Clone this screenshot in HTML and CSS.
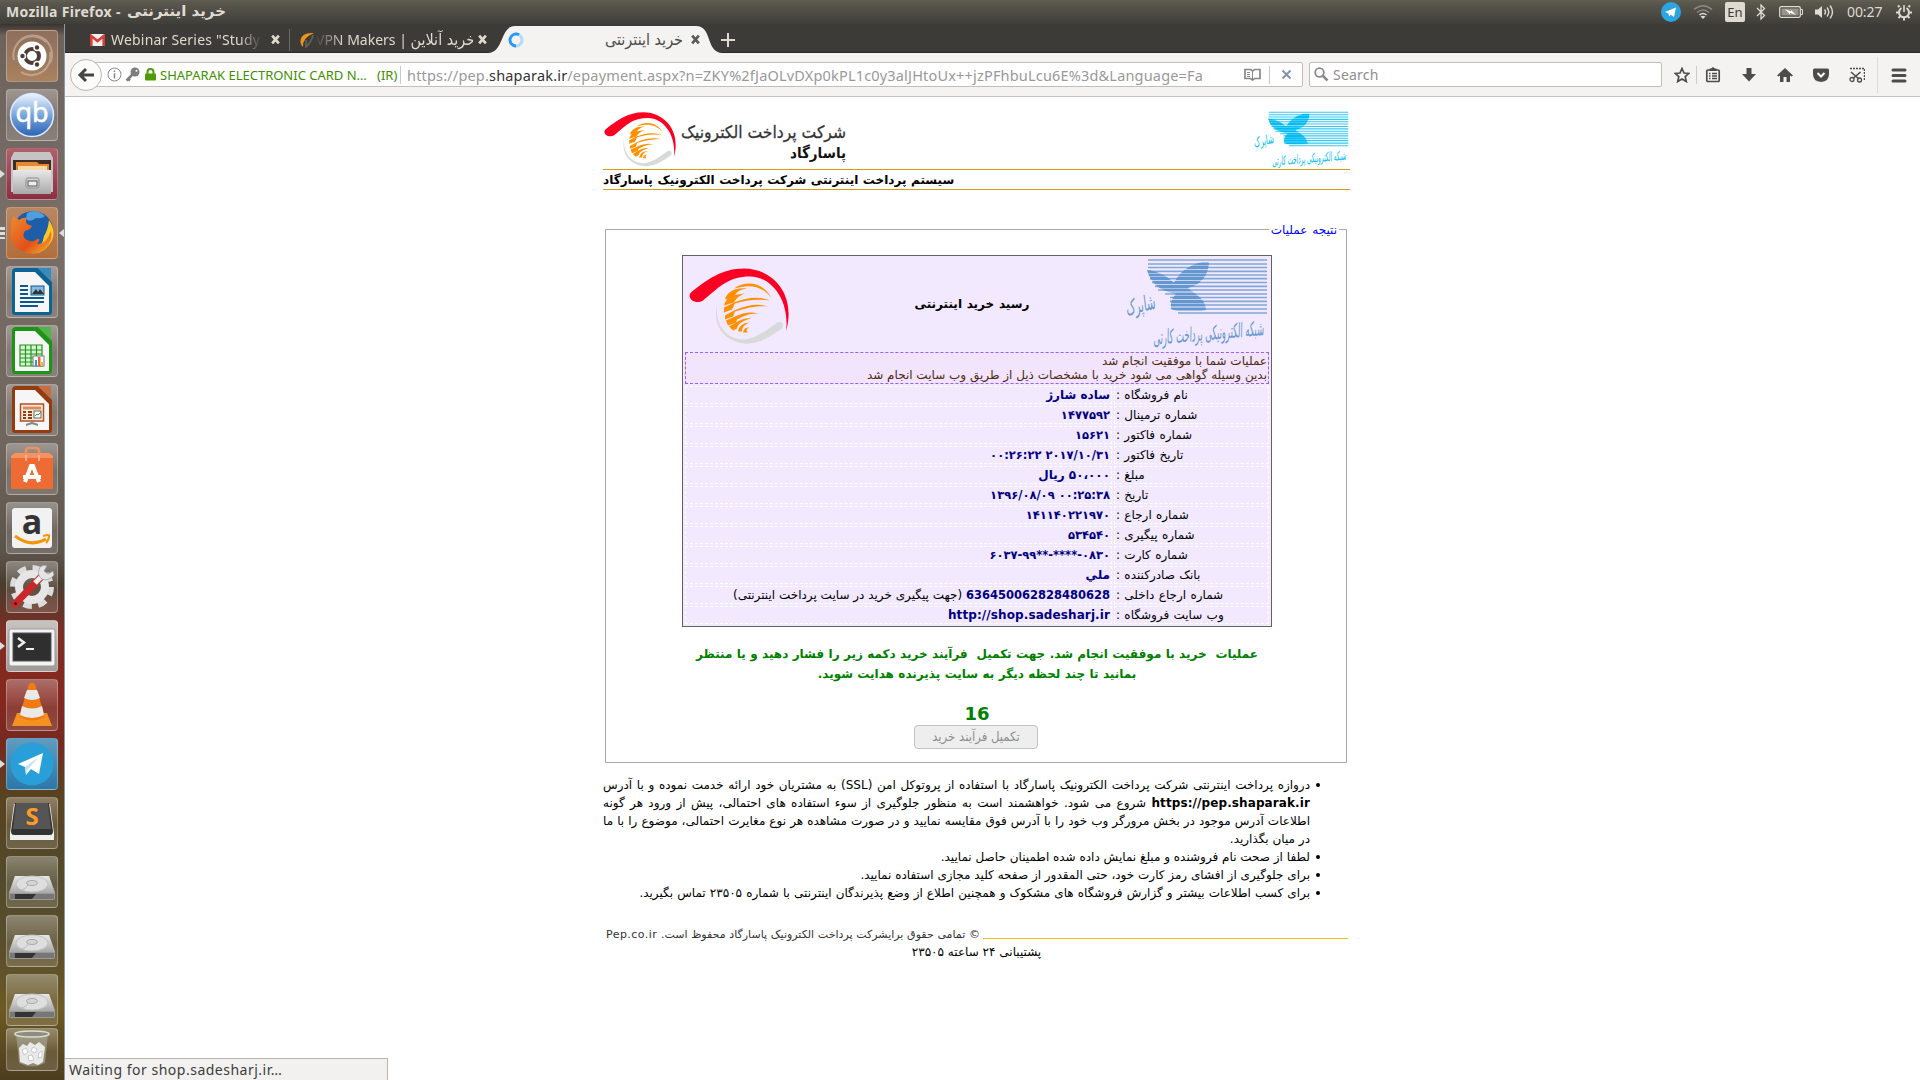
FILE: index.html
```html
<!DOCTYPE html>
<html lang="fa">
<head>
<meta charset="utf-8">
<title>خرید اینترنتی</title>
<link rel="stylesheet" href="styles.css">
</head>
<body>
<svg class="defs" width="0" height="0">
  <defs>
    <linearGradient id="steel" x1="0" y1="0" x2="0" y2="1"><stop offset="0" stop-color="#e8e8e8"/><stop offset="1" stop-color="#a9a9a9"/></linearGradient>
    <linearGradient id="sky" x1="0" y1="0" x2="0" y2="1"><stop offset="0" stop-color="#eef6ff"/><stop offset=".55" stop-color="#6f9fd8"/><stop offset="1" stop-color="#2b62b5"/></linearGradient>
    <linearGradient id="fire" x1="0" y1="0" x2="1" y2="1"><stop offset="0" stop-color="#f08a2c"/><stop offset=".6" stop-color="#e2501b"/><stop offset="1" stop-color="#f7b52a"/></linearGradient>
    <clipPath id="wings"><path d="M21 12C31 13 42 18 48 25C54 12 68 4 83 3C83 17 75 27 62 30C69 36 80 41 80 52C66 56 52 54 45 51C44 45 46 40 50 36C33 33 24 24 21 12Z"/></clipPath>
    <symbol id="pep" viewBox="0 0 100 76">
      <path d="M2 24C18 11 33 0 55 0C82 0 108 24 97 63C101 34 84 8 61 8C40 8 32 17 14 32C6 37-3 29 2 24Z" fill="#fb0023"/>
      <path d="M28 36C22 66 46 76 60 75C74 74 84 66 93 60C96 54 91 52 87 55C76 63 66 70 56 71C41 71 26 61 28 36Z" fill="#d8d9d9"/>
      <g fill="#ff9000">
        <path d="M45 20C56 12 74 13 82 29C72 16 59 16 45 20Z"/>
        <path d="M36 31C38 24 45 19 58 20C50 21 47 24 45 29Z"/>
        <path d="M35 37C37 28 45 26 56 25C50 27 47 30 45 34Z"/>
        <path d="M35 44L35 39L45 34C59 28 72 28 81 32C66 30 57 32 46 35L43 41Z"/>
        <path d="M36 51L36 47L45 42C59 36 70 35 79 38C66 37 57 40 46 43L44 48Z"/>
        <path d="M39 57L37 52L46 48C55 44 62 43 69 45C59 45 54 48 48 51L47 54Z"/>
        <path d="M44 62L40 58L47 54C52 51 57 49 62 50C54 52 49 55 48 60Z"/>
        <path d="M49 63C50 57 55 54 61 54C55 56 53 59 53 63Z"/>
        <path d="M54 64C55 60 57 59 60 59C57 61 57 62 59 64Z"/>
      </g>
    </symbol>
    <symbol id="shaparak" viewBox="0 0 142 92">
      <path d="M22 2H141M22 6H141M22 9.500H141M22 13.300H141M23 17H141M24 20.700H141M26 24.500H141M29 28.300H141M32 32H141M39 36H141M44 39.500H141M44 43.300H141M46 47H141M48 51H141M52 55H141" stroke="currentColor" stroke-width="1.700" opacity=".8"/>
      <path clip-path="url(#wings)" d="M20 6H90M20 9.500H90M20 13.300H90M20 17H90M20 20.700H90M20 24.500H90M20 28.300H90M20 32H90M20 36H90M20 39.500H90M20 43.300H90M20 47H90M20 51H90" stroke="currentColor" stroke-width="3.200"/>
      <text class="callig" x="0" y="54" font-size="21" textLength="30" lengthAdjust="spacingAndGlyphs" transform="rotate(-14 15 52)" fill="currentColor" direction="ltr">شاپرک</text>
      <text class="callig" x="27" y="82" font-size="20" textLength="111" lengthAdjust="spacingAndGlyphs" transform="rotate(-5 82 80)" fill="currentColor" direction="ltr">شبکه الکترونیکی پرداخت کارتی</text>
    </symbol>
    <symbol id="disk" viewBox="0 0 52 52">
      <path d="M9 20L43 20L49 37V42Q49 44 47 44H5Q3 44 3 42V37Z" fill="#999"/>
      <path d="M9 20L43 20L49 37H3Z" fill="url(#steel)"/>
      <path d="M4 38H48V43H4Z" fill="#777"/><path d="M9 38H30L26 43H9Z" fill="#333"/>
      <ellipse cx="26" cy="28" rx="16" ry="8" fill="#dedede" stroke="#c2c2c2"/><ellipse cx="26" cy="27" rx="5.500" ry="2.500" fill="#d5d5d5" stroke="#aaa"/>
      <path d="M13 34Q21 34 22 28" fill="none" stroke="#bbb"/>
    </symbol>
    <symbol id="close" viewBox="0 0 10 10"><path d="M2 1.500L8 8.500M8 1.500L2 8.500" stroke="currentColor" stroke-width="2.500"/></symbol>
  </defs>
</svg>

<header class="panel">
  <div class="panel-title" dir="ltr"><span class="pt-en">Mozilla Firefox -</span><span class="pt-fa">خرید اینترنتی</span></div>
  <div class="indicators">
    <svg class="i-tg" width="20" height="20" viewBox="0 0 20 20"><circle cx="10" cy="10" r="10" fill="#2ca5e0"/><path d="M4 10L15 5.500L13 15L9.800 12.800L8 14.500L7.500 11.500Z" fill="#fff"/></svg>
    <svg class="i-wifi" width="20" height="16" viewBox="0 0 20 16"><g fill="none" stroke-width="1.600"><path d="M1 5.500Q10-2 19 5.500" stroke="#8b8981"/><path d="M4 8.500Q10 3.500 16 8.500" stroke="#8b8981"/><path d="M6.500 11Q10 8 13.500 11" stroke="#dfdbd2"/></g><path d="M7.500 12.500Q10 10.800 12.500 12.500L10 15Z" fill="#dfdbd2"/></svg>
    <span class="lang">En</span>
    <svg class="i-bt" width="10" height="18" viewBox="0 0 10 18"><path d="M1 5L8.500 12.500L5 16V2L8.500 5.500L1 13" fill="none" stroke="#dfdbd2" stroke-width="1.300"/></svg>
    <svg class="i-bat" width="24" height="12" viewBox="0 0 24 12"><rect x=".7" y=".7" width="20.600" height="10.600" rx="1.500" fill="none" stroke="#dfdbd2" stroke-width="1.300"/><path d="M22 3.500H23.500V8.500H22" fill="none" stroke="#dfdbd2"/><rect x="2.500" y="2.500" width="17" height="7" fill="#98958d"/><path d="M6 3L12 5.500V4L17 9L11 6.700V8.500Z" fill="#fff"/></svg>
    <svg class="i-vol" width="20" height="18" viewBox="0 0 20 18"><path d="M0 6.500H3L7 3V15L3 11.500H0Z" fill="#dfdbd2"/><path d="M9.500 6.500Q11.500 9 9.500 11.500M12 4.500Q15.500 9 12 13.500M15 2.500Q20 9 15 15.500" fill="none" stroke="#dfdbd2" stroke-width="1.400"/></svg>
    <span class="clock">00:27</span>
    <svg class="i-gear" width="16" height="18" viewBox="0 0 16 18"><g stroke="#dfdbd2" fill="none"><path d="M5.500 5A5 5 0 1 0 10.500 5" stroke-width="2"/><path d="M8 2V9" stroke-width="1.600"/><path d="M3.500 4L2 2.500M12.500 4L14 2.500M2.500 9.500H0M13.500 9.500H16M4 13.500L2.500 15M12 13.500L13.500 15M8 15V17.500" stroke-width="2"/></g></svg>
  </div>
</header>

<div class="workspace">
<nav class="launcher">
  <div class="tile t-dash"><svg viewBox="0 0 52 52"><path d="M8 30A19 19 0 0 1 40 12M44 22A19 19 0 0 1 15 42M10 16A19 19 0 0 1 44 33" fill="none" stroke="#cdb29d" stroke-width="2" opacity=".7"/><circle cx="26" cy="26" r="14.500" fill="#fff"/><circle cx="26" cy="26" r="7" fill="none" stroke="#4e3e37" stroke-width="4"/><g fill="#4e3e37" stroke="#fff" stroke-width="1.500"><circle cx="16.500" cy="26" r="3"/><circle cx="31" cy="17.500" r="3"/><circle cx="31" cy="34.500" r="3"/></g></svg></div>
  <div class="tile"><svg viewBox="0 0 52 52"><circle cx="26" cy="26" r="21.500" fill="url(#sky)" stroke="#dcebff" stroke-width="1.500"/><text x="26" y="33" text-anchor="middle" font-size="27" class="qb" fill="#fff" stroke="#fff" stroke-width=".5">qb</text></svg></div>
  <div class="tile t-files"><svg viewBox="0 0 52 52"><path d="M8 4H44L47 10V44H5V10Z" fill="#c4c4c4"/><path d="M7 12H45V26H7Z" fill="#3e2b22"/><path d="M10 14H31L33 16H43V26H10Z" fill="#e58734"/><path d="M12 18H41V24H12Z" fill="#f9d9a5"/><path d="M7 22H45V46H7Z" fill="url(#steel)"/><rect x="20" y="30" width="13" height="10" rx="2" fill="#d5d5d5" stroke="#8d8d8d"/><rect x="22" y="33" width="9" height="5" fill="#eee" stroke="#555"/></svg><i class="mark"></i></div>
  <div class="tile t-fox"><svg viewBox="0 0 52 52"><circle cx="27" cy="24" r="20" fill="#1e5da8"/><path d="M21 6Q30 1 39 9Q36 12 30 11Q24 16 20 12Z" fill="#4f9fdc"/><path d="M43 13Q52 27 43 38Q35 48 25 46Q37 40 38 29Q42 23 43 13Z" fill="#fbc926"/><path d="M7 9Q11 11 13 13Q17 10 21 11Q19 14 21 17L26 19Q24 23 19 24Q15 30 21 33Q27 36 31 32Q36 31 31 37Q40 38 45 24Q47 34 39 42Q29 50 16 44Q2 37 5 22Q5 14 7 9Z" fill="url(#fire)"/></svg><i class="mark triple"></i><i class="mark right"></i></div>
  <div class="tile"><svg viewBox="0 0 52 52"><path d="M10 2H32L46 16V46Q46 49 43 49H9Q6 49 6 46V6Q6 2 10 2Z" fill="#0c6395"/><path d="M32 2H45V14Z" fill="#348bbd"/><path d="M9 6H29L43 20V46H9Z" fill="#f6f6f6"/><path d="M14 20H22M14 24H22M14 28H22M14 32H38M14 36H38M14 40H32" stroke="#0b5a8a" stroke-width="2"/><rect x="25" y="20" width="13" height="9" fill="#83bce0" stroke="#0b5a8a"/><path d="M26 28L30 23L32 26L34 23L38 28Z" fill="#333"/></svg></div>
  <div class="tile"><svg viewBox="0 0 52 52"><path d="M10 2H32L46 16V46Q46 49 43 49H9Q6 49 6 46V6Q6 2 10 2Z" fill="#1c9414"/><path d="M32 2H45V14Z" fill="#51b545"/><path d="M9 6H29L43 20V46H9Z" fill="#f6f6f6"/><path d="M14 20H36V41H14Z" fill="#d9f5d6"/><path d="M14 20H36V41H14ZM14 25H36M14 29H36M14 33H36M14 37H36M19.500 20V41M25 20V41M30.500 20V41" fill="none" stroke="#219618" stroke-width="1.200"/><rect x="27" y="31" width="11" height="10" fill="#fff" stroke="#777"/><path d="M29 41V35H31V41Z" fill="#259bdc"/><path d="M32 41V32H34.500V41Z" fill="#e8682a"/><path d="M35 41V37H37V41Z" fill="#f1bb35"/></svg></div>
  <div class="tile"><svg viewBox="0 0 52 52"><path d="M10 2H32L46 16V46Q46 49 43 49H9Q6 49 6 46V6Q6 2 10 2Z" fill="#943b10"/><path d="M32 2H45V14Z" fill="#c96c40"/><path d="M9 6H29L43 20V46H9Z" fill="#f6f6f6"/><rect x="14.500" y="20" width="23" height="17" fill="#fbe9de" stroke="#b3521d" stroke-width="1.500"/><path d="M17 24H35" stroke="#d98c5d" stroke-width="3"/><path d="M17 28H20M22 28H26M17 31H20M22 31H26M17 34H20M22 34H26" stroke="#943b10" stroke-width="2"/><rect x="28" y="27" width="7" height="7" fill="#fff" stroke="#666"/><path d="M29 32L31 30L32 31L35 28" stroke="#2aa02a" fill="none"/><path d="M26 37V39L20 41M26 39L32 41" stroke="#888" stroke-width="2" fill="none"/></svg></div>
  <div class="tile"><svg viewBox="0 0 52 52"><path d="M20 17V8Q20 5 23 5H30Q33 5 33 8V17" fill="none" stroke="#f09060" stroke-width="2.500"/><path d="M5 13L9 10H43L47 13V46H5Z" fill="#ee6c33"/><path d="M5 13L9 10H43L47 13V15H5Z" fill="#f6925f"/><path d="M20 12V18M33 12V18" stroke="#f7b08c" stroke-width="2"/><path d="M19 39L25 23H27L33 39M17 34H35" fill="none" stroke="#fff" stroke-width="4"/></svg></div>
  <div class="tile"><svg viewBox="0 0 52 52"><rect x="6" y="6" width="40" height="40" rx="3" fill="#f2f2f2"/><text x="26" y="32" text-anchor="middle" font-size="34" class="amz" fill="#333">a</text><path d="M9 34Q25 46 40 37" fill="none" stroke="#f79400" stroke-width="3"/><path d="M37 34Q44 32 43 34Q43 38 40 41" fill="none" stroke="#f79400" stroke-width="2"/></svg></div>
  <div class="tile"><svg viewBox="0 0 52 52"><circle cx="26" cy="26" r="18" fill="none" stroke="#dcdcdc" stroke-width="8" stroke-dasharray="8 6.137"/><circle cx="26" cy="26" r="13" fill="none" stroke="#e6e6e6" stroke-width="8"/><path d="M9 43L35 16" stroke="#c82828" stroke-width="7" stroke-linecap="round"/><path d="M29 22L37 14" stroke="#eee" stroke-width="5"/><path d="M34 6Q30 14 36 18Q42 21 48 14L47 10L42 13L38 10L41 5Q38 3 34 6Z" fill="#e4e4e4" stroke="#999" stroke-width=".7"/><circle cx="9.500" cy="42.500" r="1.500" fill="#600"/></svg></div>
  <div class="tile t-term"><svg viewBox="0 0 52 52"><rect x="3" y="9" width="46" height="37" rx="2" fill="#f3f3f3" stroke="#999"/><rect x="7" y="13" width="38" height="28" fill="#2f2f2f" stroke="#555"/><path d="M12 18L18 22.500L12 27" stroke="#eee" stroke-width="2.500" fill="none"/><path d="M20 29H28" stroke="#eee" stroke-width="2"/></svg><i class="mark"></i></div>
  <div class="tile"><svg viewBox="0 0 52 52"><path d="M11 34H41L46 47H6Z" fill="#f59120"/><path d="M23 5Q26 2 29 5L39 38Q26 45 13 38Z" fill="#f17b13"/><path d="M21 11H31L34 19Q26 23 18 19ZM16 27Q26 32 36 27L38 36Q26 42 14 36Z" fill="#e9e9e9"/></svg></div>
  <div class="tile t-tele"><svg viewBox="0 0 52 52"><circle cx="26" cy="26" r="21.500" fill="#299fda"/><path d="M12 26L37 15L33 36L25 31L20 37L19 29Z" fill="#fff"/><path d="M19 29L33 19L22 31L20 37Z" fill="#c9deec"/></svg><i class="mark"></i></div>
  <div class="tile"><svg viewBox="0 0 52 52"><path d="M8 7H44L48 36V43H4V36Z" fill="#efefef"/><path d="M9 6H43L47 34Q47 38 44 38H8Q5 38 5 34Z" fill="#333"/><path d="M10 6H42L45 32H7Z" fill="#555"/><text x="26" y="28" text-anchor="middle" font-size="24" class="amz" fill="#ff9a2b">S</text></svg></div>
  <div class="tile"><svg viewBox="0 0 52 52"><use href="#disk"/></svg></div>
  <div class="tile"><svg viewBox="0 0 52 52"><use href="#disk"/></svg></div>
  <div class="tile"><svg viewBox="0 0 52 52"><use href="#disk"/></svg></div>
  <div class="tile t-trash"><svg viewBox="0 0 52 43"><path d="M10 5H42L39 35Q26 42 13 35Z" fill="#b5b5aa" opacity=".5"/><path d="M13 20L17 16L21 18L24 14L29 17L33 14L39 19L37 34L32 37L27 35L22 37L14 34Z" fill="#e9e9e9"/><path d="M16 22L20 20L22 24L18 27ZM27 19L31 21L29 25L25 23ZM33 25L36 23L36 29L32 30ZM22 28L26 27L28 32L23 33Z" fill="#fff" stroke="#bcbcbc" stroke-width=".8"/><ellipse cx="26" cy="6" rx="17" ry="3" fill="#8f8d7e" stroke="#dcdcd6" stroke-width="1.500"/></svg></div>
</nav>

<main class="browser">
  <div class="tabs">
    <div class="tab tab1">
      <svg width="15" height="12" viewBox="0 0 15 12"><rect width="15" height="12" rx="1" fill="#f2f2f2"/><path d="M1.300 12V2L7.500 7L13.700 2V12" fill="none" stroke="#d93f35" stroke-width="2.600"/></svg>
      <span class="tab-text">Webinar Series "Study</span>
      <svg class="x" width="11" height="11"><use href="#close"/></svg>
    </div>
    <div class="tab tab2">
      <svg width="17" height="16" viewBox="0 0 17 16"><path d="M15 1Q3 0 1.500 8Q1 12 4 15Q3 6 15 1Z" fill="#e9941c"/><path d="M7 8V15Q13 9 14 3" fill="none" stroke="#65625b" stroke-width="1.600"/></svg>
      <span class="tab-text" dir="ltr">VPN Makers | <span class="vfa">خرید آنلاین</span></span>
      <svg class="x" width="11" height="11"><use href="#close"/></svg>
    </div>
    <div class="tab active">
      <svg class="tab-shape" width="236" height="29" viewBox="0 0 236 29"><path d="M0 29C16 29 12 2 27 2H208C225 2 217 29 235 29Z" fill="#f4f3f1"/></svg>
      <svg class="spin" width="16" height="16" viewBox="0 0 16 16"><circle cx="8" cy="8" r="6" fill="none" stroke="#b5daf7" stroke-width="3"/><path d="M11 2.800A6 6 0 1 0 8 14" fill="none" stroke="#2f97ee" stroke-width="2.800"/></svg>
      <span class="tab-text dark">خرید اینترنتی</span>
      <svg class="x dark" width="11" height="11"><use href="#close"/></svg>
    </div>
    <svg class="plus" width="16" height="16"><path d="M8 1V15M1 8H15" stroke="#dfdbd2" stroke-width="2"/></svg>
  </div>

  <div class="navbar">
    <span class="back"><svg width="18" height="16" viewBox="0 0 18 16"><path d="M9 2L3 8L9 14M3 8H17" fill="none" stroke="#444" stroke-width="3"/></svg></span>
    <div class="urlbox">
      <svg class="u-info" width="15" height="15" viewBox="0 0 15 15"><circle cx="7.500" cy="7.500" r="6.500" fill="none" stroke="#888"/><path d="M7.500 3.500V5M7.500 6.200V11.500" stroke="#888" stroke-width="1.500"/></svg>
      <svg class="u-key" width="15" height="15" viewBox="0 0 15 15"><circle cx="10" cy="5" r="4.500" fill="#7d7d7d"/><circle cx="11.500" cy="3.800" r="1" fill="#fff"/><path d="M8 7L1.500 13.500M3 11.500L5 13.500" stroke="#7d7d7d" stroke-width="2.500"/></svg>
      <svg class="u-lock" width="11" height="13" viewBox="0 0 11 13"><rect y="5.500" width="11" height="7" rx="1" fill="#4f9a06"/><path d="M2.500 6V4Q2.500 1 5.500 1Q8.500 1 8.500 4V6" fill="none" stroke="#4f9a06" stroke-width="2"/></svg>
      <span class="cert">SHAPARAK ELECTRONIC CARD N…</span><span class="ir">(IR)</span><i class="bar"></i>
      <span class="url">https://pep.<b>shaparak.ir</b>/epayment.aspx?n=ZKY%2fJaOLvDXp0kPL1c0y3alJHtoUx++jzPFhbuLcu6E%3d&amp;Language=Fa</span>
      <svg class="u-read" width="17" height="13" viewBox="0 0 17 13"><path d="M1 1.500H6.500L8.500 3L10.500 1.500H16V10.500H10.500L8.500 12L6.500 10.500H1Z" fill="none" stroke="#888" stroke-width="1.700"/><path d="M8.500 3V11M3 4.500H6M3 6.500H6M3 8.500H6" stroke="#888"/></svg>
      <i class="bar b2"></i>
      <svg class="u-x" width="11" height="11" viewBox="0 0 11 11"><path d="M1.500 1.500L9.500 9.500M9.500 1.500L1.500 9.500" stroke="#8593a2" stroke-width="2"/></svg>
    </div>
    <div class="search"><svg width="15" height="15" viewBox="0 0 15 15"><circle cx="5.500" cy="5.500" r="4.300" fill="none" stroke="#8a8a8a" stroke-width="1.800"/><path d="M8.500 8.500L13.500 13.500" stroke="#8a8a8a" stroke-width="2.500"/></svg><span>Search</span></div>
    <div class="tools">
      <svg width="16" height="16" viewBox="0 0 16 16"><path d="M8 1.500L10 6L14.800 6.400L11.200 9.600L12.300 14.500L8 11.900L3.700 14.500L4.800 9.600L1.200 6.400L6 6Z" fill="none" stroke="#4c4c4c" stroke-width="1.700"/></svg>
      <i class="tbar"></i>
      <svg width="16" height="16" viewBox="0 0 16 16"><rect x="1.800" y="3" width="12.400" height="11.500" rx="1" fill="none" stroke="#4c4c4c" stroke-width="1.700"/><path d="M4.500 1.500H6L8 0L10 1.500H11.500V4H4.500Z" fill="#4c4c4c"/><path d="M4 6.500H5.500M7 6.500H12M4 9H5.500M7 9H12M4 11.500H5.500M7 11.500H12" stroke="#4c4c4c" stroke-width="1.400"/></svg>
      <svg width="16" height="16" viewBox="0 0 16 16"><path d="M5.500 1H10.500V7H15L8 14.500L1 7H5.500Z" fill="#4c4c4c"/></svg>
      <svg width="16" height="16" viewBox="0 0 16 16"><path d="M8 1L16 8.500L14.500 9.500L13 8.500V15H9.500V10H6.500V15H3V8.500L1.500 9.500L0 8.500Z" fill="#4c4c4c"/></svg>
      <svg width="16" height="16" viewBox="0 0 16 16"><path d="M1.500 1.500H14.500Q16 1.500 16 3V7Q16 14.500 8 15Q0 14.500 0 7V3Q0 1.500 1.500 1.500Z" fill="#4c4c4c"/><path d="M4.500 6L8 9.500L11.500 6" fill="none" stroke="#fff" stroke-width="2"/></svg>
      <svg width="16" height="16" viewBox="0 0 16 16"><path d="M1 1.500H15.500V13" fill="none" stroke="#4c4c4c" stroke-width="1.500" stroke-dasharray="2 1"/><path d="M2 5L10 12M11.500 5L4 11.500" stroke="#4c4c4c" stroke-width="1.600"/><circle cx="3" cy="12.500" r="2" fill="none" stroke="#4c4c4c" stroke-width="1.300"/><circle cx="10.500" cy="13" r="2" fill="none" stroke="#4c4c4c" stroke-width="1.300"/></svg>
      <i class="mbar"></i>
      <svg width="16" height="16" viewBox="0 0 16 16"><path d="M2 3H14M2 8.500H14M2 14H14" stroke="#4c4c4c" stroke-width="3" stroke-linecap="round"/></svg>
    </div>
  </div>

  <div class="page">
    <div class="container" dir="rtl">
      <div class="brand">
        <svg class="b-shap" width="95" height="58" viewBox="0 0 142 92" preserveAspectRatio="none"><use href="#shaparak"/></svg>
        <div class="b-pep">
          <svg width="244" height="56" viewBox="0 0 244 56">
            <use href="#pep" x="1" y="0" width="72" height="55"/>
            <text x="78" y="26" font-size="17" textLength="165" lengthAdjust="spacingAndGlyphs" fill="#333" stroke="#333" stroke-width=".3" direction="ltr" class="pn">شرکت پرداخت الکترونیک</text>
            <text x="187" y="46" font-size="15" textLength="56" lengthAdjust="spacingAndGlyphs" fill="#111" direction="ltr" class="pb">پاسارگاد</text>
          </svg>
        </div>
      </div>
      <div class="sysname">سیستم پرداخت اینترنتی شرکت پرداخت الکترونیک پاسارگاد</div>

      <fieldset class="result">
        <legend>نتیجه عملیات</legend>
        <div class="receipt">
          <div class="r-head">
            <svg class="r-shap" width="142" height="92"><use href="#shaparak"/></svg>
            <b>رسید خرید اینترنتی</b>
            <svg class="r-pep" width="100" height="77"><use href="#pep"/></svg>
          </div>
          <div class="r-note">عملیات شما با موفقیت انجام شد<br>بدین وسیله گواهی می شود خرید با مشخصات ذیل از طریق وب سایت انجام شد</div>
          <div class="row"><span class="k">نام فروشگاه :</span><span class="v"><b>ساده شارژ</b></span></div>
          <div class="row"><span class="k">شماره ترمینال :</span><span class="v"><b class="num">۱۴۷۷۵۹۲</b></span></div>
          <div class="row"><span class="k">شماره فاکتور :</span><span class="v"><b class="num">۱۵۶۲۱</b></span></div>
          <div class="row"><span class="k">تاریخ فاکتور :</span><span class="v"><b class="num">۲۰۱۷/۱۰/۳۱ ۰۰:۲۶:۲۲</b></span></div>
          <div class="row"><span class="k">مبلغ :</span><span class="v"><b>۵۰،۰۰۰ ریال</b></span></div>
          <div class="row"><span class="k">تاریخ :</span><span class="v"><b class="num">۰۰:۲۵:۳۸ ۱۳۹۶/۰۸/۰۹</b></span></div>
          <div class="row"><span class="k">شماره ارجاع :</span><span class="v"><b class="num">۱۴۱۱۴۰۲۲۱۹۷۰</b></span></div>
          <div class="row"><span class="k">شماره پیگیری :</span><span class="v"><b class="num">۵۳۴۵۴۰</b></span></div>
          <div class="row"><span class="k">شماره کارت :</span><span class="v"><b class="num" dir="ltr">۶۰۳۷-۹۹**-****-۰۸۳۰</b></span></div>
          <div class="row"><span class="k">بانک صادرکننده :</span><span class="v"><b>ملي</b></span></div>
          <div class="row"><span class="k">شماره ارجاع داخلی :</span><span class="v"><b class="num">636450062828480628</b> (جهت پیگیری خرید در سایت پرداخت اینترنتی)</span></div>
          <div class="row"><span class="k">وب سایت فروشگاه :</span><span class="v"><b class="web" dir="ltr">http://shop.sadesharj.ir</b></span></div>
        </div>
        <div class="done">عملیات &nbsp;خرید با موفقیت انجام شد. جهت تکمیل &nbsp;فرآیند خرید دکمه زیر را فشار دهید و یا منتظر<br>بمانید تا چند لحظه دیگر به سایت پذیرنده هدایت شوید.</div>
        <div class="count">16</div>
        <div class="finish">تکمیل فرآیند خرید</div>
      </fieldset>

      <ul class="notes">
        <li>دروازه پرداخت اینترنتی شرکت پرداخت الکترونیک پاسارگاد با استفاده از پروتوکل امن (SSL) به مشتریان خود ارائه خدمت نموده و با آدرس <b class="web" dir="ltr">https://pep.shaparak.ir</b> شروع می شود. خواهشمند است به منظور جلوگیری از سوء استفاده های احتمالی، پیش از ورود هر گونه اطلاعات آدرس موجود در بخش مرورگر وب خود را با آدرس فوق مقایسه نمایید و در صورت مشاهده هر نوع مغایرت احتمالی، موضوع را با ما در میان بگذارید.</li>
        <li>لطفا از صحت نام فروشنده و مبلغ نمایش داده شده اطمینان حاصل نمایید.</li>
        <li>برای جلوگیری از افشای رمز کارت خود، حتی المقدور از صفحه کلید مجازی استفاده نمایید.</li>
        <li class="wide">برای کسب اطلاعات بیشتر و گزارش فروشگاه های مشکوک و همچنین اطلاع از وضع پذیرندگان اینترنتی با شماره ۲۳۵۰۵ تماس بگیرید.</li>
      </ul>

      <div class="copy"><i></i><span>© تمامی حقوق برایشرکت پرداخت الکترونیک پاسارگاد محفوظ است. <span class="dom">Pep.co.ir</span></span></div>
      <div class="support">پشتیبانی ۲۴ ساعته ۲۳۵۰۵</div>
    </div>
    <div class="status">Waiting for shop.sadesharj.ir…</div>
  </div>
</main>
</div>
</body>
</html>
```
FILE: styles.css
```css
* { box-sizing: border-box; }
body { margin: 0; width: 1920px; height: 1080px; overflow: hidden; background: #fff; font-family: "Noto Sans", "DejaVu Sans", sans-serif; font-size: 14px; }
svg { display: block; flex: none; }
.defs { position: absolute; }

.panel { height: 24px; display: flex; justify-content: space-between; background: linear-gradient(#615e50 0 1px, #5b584f 2px, #3f3e39); color: #dfdbd2; }
.panel-title { display: flex; padding-left: 6px; font-weight: bold; line-height: 23px; white-space: nowrap; }
.pt-en { width: 121px; font-size: 14px; letter-spacing: 0.3px; }
.pt-fa { font-family: "DejaVu Sans", sans-serif; font-size: 15px; }
.indicators { display: flex; align-items: center; padding-right: 8px; }
.i-wifi { margin-left: 12px; }
.lang { width: 20px; height: 20px; margin-left: 12px; border-radius: 2px; background: #dfdbd2; color: #3c3b37; font: 13px/20px "Noto Sans", sans-serif; text-align: center; }
.i-bt { margin-left: 11px; }
.i-bat { margin-left: 13px; }
.i-vol { margin-left: 12px; }
.clock { width: 37px; margin-left: 12px; font-size: 14px; line-height: 24px; letter-spacing: -0.1px; }
.i-gear { margin-left: 12px; }

.workspace { display: flex; height: 1056px; }
.launcher { width: 65px; flex: none; display: flex; flex-direction: column; gap: 7px; padding: 6px 0 0 6px; border-right: 1px solid #8f96a4; background: linear-gradient(#3a332f 0, #6e625c 12px, #796e67 200px, #6f665e 420px, #5c534b 530px, #493d2e 560px, #7f2d23 610px, #86281f 670px, #75291f 720px, #59421f 770px, #524a2c 850px, #5b4f2c 930px, #6d5a22 985px, #4c3d20); }
.tile { position: relative; width: 52px; height: 52px; flex: none; border-radius: 4px; border: 1px solid rgba(255,255,255,.28); background: linear-gradient(rgba(255,255,255,.32), rgba(255,255,255,.1) 55%, rgba(255,255,255,.16)); }
.tile > svg { width: 52px; height: 52px; margin: -1px; }
.t-dash { background: linear-gradient(#8d6f5d, #a8825f); }
.t-files { background: linear-gradient(#b0606b, #8a2f42); }
.t-fox { background: linear-gradient(#b98763, #b26e38); }
.t-term { background: linear-gradient(#c9c3bf, #a19a97); }
.t-tele { background: linear-gradient(#5f9cc0, #2b78a8); }
.t-trash { height: 43px; margin-top: -5px; }
.t-trash > svg { height: 43px; }
.qb { font-family: "Noto Sans", sans-serif; }
.amz { font-family: "Open Sans", sans-serif; font-weight: bold; }
.mark { position: absolute; left: -7px; top: 21px; border: 4px solid transparent; border-left: 5px solid #ddd; }
.mark.triple { top: 19px; width: 5px; height: 12px; border: 0; background: repeating-linear-gradient(#ddd 0 3px, transparent 3px 5px); }
.mark.right { left: auto; right: -7px; border-left: 0; border-right: 5px solid #ddd; }

.browser { flex: 1; display: flex; flex-direction: column; min-width: 0; }
.tabs { height: 29px; flex: none; display: flex; background: #3c3b37; box-shadow: inset 0 -1px #2a2926; color: #dfdbd2; }
.tab { position: relative; display: flex; align-items: center; padding-top: 2px; white-space: nowrap; }
.tab svg { position: relative; }
.tab1 { width: 225px; padding-left: 25px; }
.tab1::after { content: ""; width: 1px; height: 22px; margin-left: auto; background: #6d6b65; }
.tab-text { overflow: hidden; line-height: 22px; position: relative; }
.tab1 .tab-text { width: 151px; margin: 0 8px 0 6px; letter-spacing: 0.2px; -webkit-mask: linear-gradient(90deg, #000 128px, transparent); mask: linear-gradient(90deg, #000 128px, transparent); }
.tab2 { width: 198px; padding-left: 9px; }
.tab2 .tab-text { width: 163px; margin: 0 4px 0 0; text-align: right; -webkit-mask: linear-gradient(270deg, #000 130px, transparent 158px); mask: linear-gradient(270deg, #000 130px, transparent 158px); }
.vfa, .tab-text.dark { font-family: "DejaVu Sans Condensed", "DejaVu Sans", sans-serif; font-stretch: condensed; font-size: 16px; }
.active { width: 235px; padding-left: 20px; }
.tab .tab-shape { position: absolute; left: 0; top: 0; }
.tab-text.dark { width: 84px; margin: 0 1px 0 81px; color: #4c4c4c; }
.x { color: #dfdbd2; }
.x.dark { color: #5b5a57; }
.plus { margin: 8px 0 0 -3px; }

.navbar { height: 44px; flex: none; display: flex; align-items: center; background: #f4f3f1; border-bottom: 1px solid #c4c1bc; }
.back { position: relative; z-index: 1; width: 32px; height: 32px; margin-left: 5px; flex: none; display: grid; place-items: center; border: 1px solid #b9b6b2; border-radius: 50%; background: #fbfbfa; }
.urlbox { width: 1217px; height: 25px; margin-left: -16px; padding-left: 20px; flex: none; display: flex; align-items: center; border: 1px solid #c1beba; border-radius: 2px; background: #fff; white-space: nowrap; }
.u-key { margin-left: 3px; }
.u-lock { margin-left: 5px; }
.cert { width: 217px; margin-left: 4px; color: #3f9000; font-size: 13px; letter-spacing: 0; }
.ir { width: 23px; color: #3f9000; font-size: 13px; }
.bar { width: 1px; height: 18px; background: #c9c9c9; }
.url { width: 837px; margin-left: 6px; color: #999; font-size: 14.500px; line-height: 20px; letter-spacing: 0.18px; }
.url b { font-weight: normal; color: #333; }
.b2 { margin: 0 11px 0 8px; }
.search { width: 353px; height: 25px; margin-left: 6px; flex: none; display: flex; align-items: center; gap: 4px; padding-left: 4px; border: 1px solid #c1beba; border-radius: 2px; background: #fff; color: #8e8e8e; letter-spacing: 0.2px; }
.tools { display: flex; align-items: center; margin-left: 12px; }
.tools svg + svg { margin-left: 20px; }
.tbar { width: 1px; height: 18px; margin: 0 8px 0 6px; background: #d0cdc9; }
.mbar { width: 1px; height: 36px; margin: 0 13px 0 12px; background: #dedbd7; }

.page { position: relative; flex: 1; background: #fff; font: 12px "DejaVu Sans", sans-serif; color: #000; }
.container { width: 747px; margin-left: 538px; padding-top: 14px; }
.brand { height: 58px; display: flex; justify-content: space-between; align-items: flex-start; }
.b-shap { color: #00bcf2; margin-right: 1px; }
.b-pep { padding-top: 1px; }
.callig { font-family: "DejaVu Sans", sans-serif; font-style: italic; }
.pn { font-family: "DejaVu Sans", sans-serif; }
.pb { font-family: "DejaVu Sans", sans-serif; font-weight: bold; }
.sysname { height: 21px; border: solid #d79d12; border-width: 1px 0; font-weight: bold; line-height: 20px; text-align: left; word-spacing: 0.4px; }
.result { width: 742px; height: 541px; margin: 32px 3px 0 2px; padding: 0; border: 1px solid #a9a9a9; min-width: 0; }
.result legend { margin-right: 7px; padding: 0 2px; color: #00f; height: 14px; line-height: 16px; word-spacing: 1px; }
.receipt { width: 590px; height: 372px; margin: 19px 74px 0 0; padding: 2px; display: flex; flex-direction: column; gap: 2px; border: 1px solid #626262; background: #f2e9ff; }
.r-head { height: 92px; display: flex; justify-content: space-between; align-items: flex-start; padding: 0 1px 0 4px; }
.r-head b { line-height: 93px; margin-left: 29px; word-spacing: 0.500px; }
.r-shap { color: #6497cf; }
.r-pep { margin-top: 10px; }
.r-note { height: 32px; padding: 1px; border: 1px dashed #9461ff; background: #f2e4fd; color: #4b2b13; line-height: 14px; }
.row { height: 18px; display: flex; gap: 2px; line-height: 16px; }
.k, .v { border: 1px dashed #fff; padding: 0 1px; }
.k { width: 155px; text-align: left; word-spacing: 0.500px; }
.v { width: 427px; white-space: nowrap; }
.v b { color: #000080; }
.v .num { font-size: 11.5px; }
.web { letter-spacing: 0.1px; }
.done { height: 60px; margin: 17px -1px 0 0; padding-left: 1px; text-align: center; color: #008000; font-weight: bold; line-height: 20px; word-spacing: 0.2px; }
.count { height: 21px; padding-left: 2px; color: #008000; font-size: 18px; font-weight: bold; line-height: 20px; text-align: center; }
.finish { width: 124px; height: 24px; margin: 0 308px 0 0; border: 1px solid #c4c4c4; border-radius: 4px; background: #eee; color: #8f8f8f; font: 13px/21px "DejaVu Sans Condensed", "DejaVu Sans", sans-serif; font-stretch: condensed; text-align: center; }
.notes { margin: 13px 0 0; padding: 0 40px 0 0; line-height: 18px; text-align: justify; list-style: none; }
.notes li::before { content: ""; float: right; width: 4px; height: 4px; margin: 7px -10px 0 0; border-radius: 50%; background: #000; }
.wide { word-spacing: 0.28px; }
.copy { display: flex; height: 18px; margin-top: 23px; padding: 0 2px 0 3px; color: #333; font-size: 11px; line-height: 19px; white-space: nowrap; word-spacing: 0.2px; }
.dom { letter-spacing: 0.45px; }
.copy i { flex: 1; height: 1px; margin: 13px 0 0 3px; background: #f7b922; }
.support { text-align: center; line-height: 18px; }
.status { position: absolute; left: 0; bottom: 0; width: 323px; height: 22px; padding-left: 4px; border: 1px solid #b9b6b2; border-left: 0; border-bottom: 0; background: #f2f1f0; color: #3c3c3c; font: 14px/22px "Noto Sans", sans-serif; letter-spacing: 0.5px; }
```
